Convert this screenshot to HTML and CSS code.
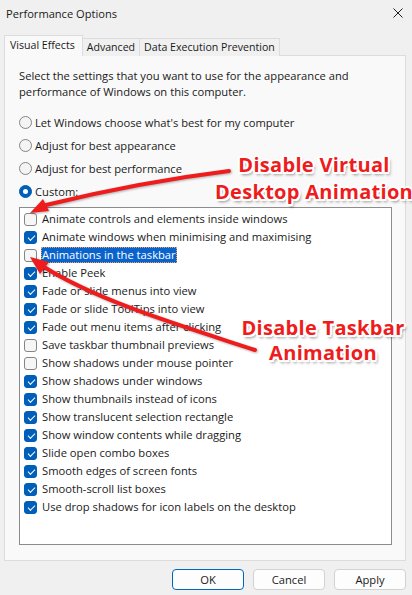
FILE: index.html
```html
<!DOCTYPE html>
<html>
<head>
<meta charset="utf-8">
<title>Performance Options</title>
<link rel="stylesheet" href="styles.css">
</head>
<body>
<div class="window">
  <div class="titlebar">
    <span class="title">Performance Options</span>
    <svg class="close" width="10" height="10" viewBox="0 0 10 10"><path d="M0.5 0.5 L9.5 9.5 M9.5 0.5 L0.5 9.5" stroke="#1f1f1f" stroke-width="1" fill="none"/></svg>
  </div>
  <div class="tabs">
    <div class="tab active">Visual Effects</div>
    <div class="tab">Advanced</div>
    <div class="tab">Data Execution Prevention</div>
  </div>
  <div class="panel">
    <p class="intro">Select the settings that you want to use for the appearance and<br>performance of Windows on this computer.</p>
    <div class="radios">
      <div class="radio"><span class="rb"></span>Let Windows choose what's best for my computer</div>
      <div class="radio"><span class="rb"></span>Adjust for best appearance</div>
      <div class="radio"><span class="rb"></span>Adjust for best performance</div>
      <div class="radio"><span class="rb on"></span>Custom:</div>
    </div>
    <div class="listbox">
      <div class="item"><span class="cb"></span><span class="lbl">Animate controls and elements inside windows</span></div>
      <div class="item"><span class="cb on"></span><span class="lbl">Animate windows when minimising and maximising</span></div>
      <div class="item"><span class="cb"></span><span class="lbl sel">Animations in the taskbar</span></div>
      <div class="item"><span class="cb on"></span><span class="lbl">Enable Peek</span></div>
      <div class="item"><span class="cb on"></span><span class="lbl">Fade or slide menus into view</span></div>
      <div class="item"><span class="cb on"></span><span class="lbl">Fade or slide ToolTips into view</span></div>
      <div class="item"><span class="cb on"></span><span class="lbl">Fade out menu items after clicking</span></div>
      <div class="item"><span class="cb"></span><span class="lbl">Save taskbar thumbnail previews</span></div>
      <div class="item"><span class="cb"></span><span class="lbl">Show shadows under mouse pointer</span></div>
      <div class="item"><span class="cb on"></span><span class="lbl">Show shadows under windows</span></div>
      <div class="item"><span class="cb on"></span><span class="lbl">Show thumbnails instead of icons</span></div>
      <div class="item"><span class="cb on"></span><span class="lbl">Show translucent selection rectangle</span></div>
      <div class="item"><span class="cb on"></span><span class="lbl">Show window contents while dragging</span></div>
      <div class="item"><span class="cb on"></span><span class="lbl">Slide open combo boxes</span></div>
      <div class="item"><span class="cb on"></span><span class="lbl">Smooth edges of screen fonts</span></div>
      <div class="item"><span class="cb on"></span><span class="lbl">Smooth-scroll list boxes</span></div>
      <div class="item"><span class="cb on"></span><span class="lbl">Use drop shadows for icon labels on the desktop</span></div>
    </div>
  </div>
  <div class="buttons">
    <button class="btn default">OK</button>
    <button class="btn">Cancel</button>
    <button class="btn">Apply</button>
  </div>
</div>

<svg class="arrows" width="412" height="595" viewBox="0 0 412 595">
  <g class="arrow">
    <path d="M229 171 Q140 182 46 205" stroke="#ee1c1c" stroke-width="4" fill="none" stroke-linecap="round"/>
    <polygon points="30,213 49,211 43,199" fill="#ee1c1c"/>
  </g>
  <g class="arrow">
    <path d="M255 350 C185 327 100 302 44 267" stroke="#ee1c1c" stroke-width="4" fill="none" stroke-linecap="round"/>
    <polygon points="30,257 49,262 40,274" fill="#ee1c1c"/>
  </g>
</svg>
<div class="note note-virtual">Disable Virtual<br>Desktop Animation</div>
<div class="note note-taskbar">Disable Taskbar<br>Animation</div>
</body>
</html>
```

FILE: styles.css
```css
* { box-sizing: border-box; }

html, body {
  margin: 0;
  padding: 0;
}

body {
  width: 412px;
  height: 595px;
  overflow: hidden;
  position: relative;
  background: #f0f0f0;
  font-family: "Open Sans", "Noto Sans", sans-serif;
  font-size: 11.2px;
  color: #1a1a1a;
}

.window {
  display: flex;
  flex-direction: column;
}

.titlebar {
  height: 26px;
  display: flex;
  align-items: center;
  justify-content: space-between;
  padding: 0 9px 0 6px;
}

.title {
  font-size: 11.1px;
}

.tabs {
  display: flex;
  align-items: flex-end;
  padding: 0 0 0 4px;
  height: 30px;
  margin-bottom: -1px;
  position: relative;
  z-index: 1;
  font-size: 10.6px;
}

.tab {
  height: 18px;
  padding: 0 4px 0 4px;
  line-height: 17px;
  border: 1px solid #dcdcdc;
  border-bottom: none;
  border-left: none;
  background: #f0f0f0;
}

.tab.active {
  height: 21px;
  line-height: 19px;
  background: #f9f9f9;
  border-left: 1px solid #dcdcdc;
  padding: 0 7px 0 5px;
}

.panel {
  margin: 0 6px 0 4px;
  background: #f9f9f9;
  border: 1px solid #dcdcdc;
  padding: 12px 14px 15px 14px;
}

.intro {
  margin: 0;
  line-height: 16px;
}

.radios {
  margin-top: 11px;
  display: flex;
  flex-direction: column;
}

.radio {
  height: 23px;
  display: flex;
  align-items: center;
  gap: 3px;
}

.rb {
  width: 13px;
  height: 13px;
  border-radius: 50%;
  border: 1px solid #858585;
  background: #f4f4f4;
  display: flex;
  align-items: center;
  justify-content: center;
}

.rb.on {
  background: #005fb8;
  border-color: #005fb8;
}

.rb.on::after {
  content: "";
  width: 5px;
  height: 5px;
  border-radius: 50%;
  background: #fff;
}

.listbox {
  margin-top: 4px;
  height: 338px;
  width: 373px;
  border: 1px solid #8c8c8c;
  background: #fff;
  padding: 2px 0 0 4px;
}

.item {
  height: 18px;
  display: flex;
  align-items: center;
  gap: 5px;
}

.cb {
  width: 13px;
  height: 13px;
  flex: none;
  border-radius: 3px;
  border: 1px solid #858585;
  background: #f6f6f6;
  position: relative;
}

.cb.on {
  background: #005fb8;
  border-color: #005fb8;
}

.cb.on::after {
  content: "";
  position: absolute;
  left: 3px;
  top: 3px;
  width: 6px;
  height: 3px;
  border-left: 1px solid #fff;
  border-bottom: 1px solid #fff;
  transform: rotate(-45deg);
}

.lbl {
  line-height: 16px;
}

.lbl.sel {
  background: #0a63cc;
  color: #fff;
  margin-left: -1px;
  padding: 0 1px;
  outline: 1px dotted #e9a35a;
  outline-offset: -1px;
}

.buttons {
  display: flex;
  justify-content: flex-end;
  gap: 9px;
  padding: 8px 6px 0 0;
}

.btn {
  width: 72px;
  height: 21px;
  border: 1px solid #d2d2d2;
  border-radius: 4px;
  background: #fdfdfd;
  font: inherit;
  color: #1a1a1a;
  padding: 0;
}

.btn.default {
  border-color: #0067c0;
}

.arrows {
  position: absolute;
  left: 0;
  top: 0;
  pointer-events: none;
}

.arrow {
  filter: drop-shadow(1px 1px 1px rgba(0, 0, 0, 0.3));
}

.note {
  position: absolute;
  text-align: center;
  font-family: "Open Sans", "Noto Sans", sans-serif;
  font-weight: 700;
  font-size: 20px;
  letter-spacing: 0.3px;
  color: #ee1c1c;
  white-space: nowrap;
  text-shadow:
    -2px 0 #fff, 2px 0 #fff, 0 -2px #fff, 0 2px #fff,
    -1.5px -1.5px #fff, 1.5px 1.5px #fff, -1.5px 1.5px #fff, 1.5px -1.5px #fff,
    2px 3px 3px rgba(0, 0, 0, 0.45);
}

.note-virtual {
  left: 212px;
  top: 151px;
  width: 204px;
  line-height: 27px;
}

.note-taskbar {
  left: 223px;
  top: 315px;
  width: 200px;
  line-height: 25px;
}
```
